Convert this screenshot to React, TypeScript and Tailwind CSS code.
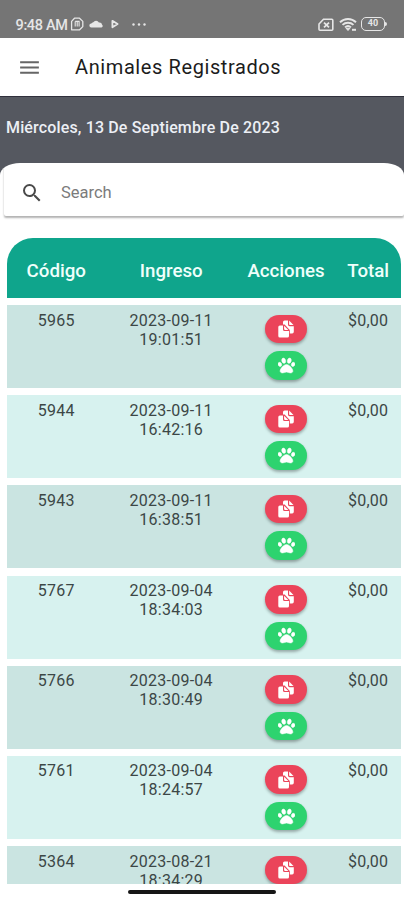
import { FaPaw } from "react-icons/fa";
import { MdMenu, MdSearch } from "react-icons/md";

interface Registro {
  codigo: string;
  fecha: string;
  hora: string;
  total: string;
}

const registros: Registro[] = [
  { codigo: "5965", fecha: "2023-09-11", hora: "19:01:51", total: "$0,00" },
  { codigo: "5944", fecha: "2023-09-11", hora: "16:42:16", total: "$0,00" },
  { codigo: "5943", fecha: "2023-09-11", hora: "16:38:51", total: "$0,00" },
  { codigo: "5767", fecha: "2023-09-04", hora: "18:34:03", total: "$0,00" },
  { codigo: "5766", fecha: "2023-09-04", hora: "18:30:49", total: "$0,00" },
  { codigo: "5761", fecha: "2023-09-04", hora: "18:24:57", total: "$0,00" },
  { codigo: "5364", fecha: "2023-08-21", hora: "18:34:29", total: "$0,00" },
];

function StatusBar() {
  return (
    <div className="flex h-[38px] shrink-0 items-start bg-[#757575] pt-[17px] pl-[15.5px] text-[#e6e6e6]">
      <span className="w-[53px] text-[14.5px] leading-[17px] font-medium whitespace-nowrap tracking-[-0.35px]">
        9:48 AM
      </span>
      <svg className="ml-[1.5px] h-[14px] w-[14px]" viewBox="0 0 14 14" fill="none" stroke="currentColor">
        <path d="M4.5 1.2h5L12.8 4.4v5.2L9.6 12.8H1.6V4.4z" strokeWidth="1.3" strokeLinejoin="round" />
        <path d="M5.2 4.4h3.9v5M5.2 4.4v5M7.2 4.4v5" strokeWidth="1.1" />
      </svg>
      <svg className="mt-[2px] ml-[5px] h-[9px] w-[14px]" viewBox="0 0 14 9" fill="currentColor">
        <path d="M2.4 8.5a2 2 0 0 1-.1-4 3 3 0 0 1 2-1.3 3.2 3.2 0 0 1 5.6.3 2.8 2.8 0 0 1 3.2 2.3 1.5 1.5 0 0 1-.6 2.7z" />
      </svg>
      <svg className="mt-[2px] ml-[8px] h-[10px] w-[8px]" viewBox="0 0 8 10" fill="none" stroke="currentColor">
        <path d="M1.4 1.8 6.6 5 1.4 8.2z" strokeWidth="1.8" strokeLinejoin="round" />
      </svg>
      <svg className="mt-[6px] ml-[12.5px] h-[3px] w-[14px]" viewBox="0 0 14 3" fill="currentColor">
        <circle cx="1.5" cy="1.5" r="1.2" />
        <circle cx="7" cy="1.5" r="1.2" />
        <circle cx="12.5" cy="1.5" r="1.2" />
      </svg>

      <div className="ml-auto flex pr-[17px]">
        <svg className="mt-[1px] h-[14px] w-[16px]" viewBox="0 0 16 14" fill="none" stroke="currentColor">
          <path d="M5.5 1.2h8.3a1 1 0 0 1 1 1v9a1 1 0 0 1-1 1H2a1 1 0 0 1-1-1V6z" strokeWidth="1.6" />
          <path d="m6 4.7 5 4.6M11 4.7 6 9.3" strokeWidth="1.8" />
        </svg>
        <svg className="ml-[5px] h-[15px] w-[18px]" viewBox="0 0 18 15" fill="none" stroke="currentColor">
          <path d="M1 5.2a11.5 11.5 0 0 1 16 0M3.5 7.9a8 8 0 0 1 11 0M6 10.4a4.5 4.5 0 0 1 6 0" strokeWidth="1.9" />
          <path d="m7 11.2 2 2.3 2-2.3z" fill="currentColor" />
          <path d="M13 12.8h4" strokeWidth="2" />
        </svg>
        <div className="ml-[4px] h-[14px] w-[24px] rounded-[5px] border-[1.5px] border-[#e6e6e6] text-center">
          <span className="block text-[9px] leading-[11px] font-bold">40</span>
        </div>
        <div className="mt-[5px] h-[4px] w-[2px] rounded-r bg-[#e6e6e6]" />
      </div>
    </div>
  );
}

function DocumentosIcon() {
  return (
    <svg className="h-[18px] w-[16px]" viewBox="0 0 16 18" fill="currentColor">
      <path d="M5 4.6V2A1.6 1.6 0 0 1 6.6.4H10v4.2a1.6 1.6 0 0 0 1.6 1.6h4.2v5.6a1.6 1.6 0 0 1-1.6 1.6h-2.4V10L6.6 4.6z" />
      <path d="M11.1.6 15.5 5h-3.6a.8.8 0 0 1-.8-.8z" />
      <path d="M.3 7A1.6 1.6 0 0 1 1.9 5.4H5v4A1.6 1.6 0 0 0 6.6 11H11v5a1.6 1.6 0 0 1-1.6 1.6H1.9A1.6 1.6 0 0 1 .3 16z" />
      <path d="m6.1 5.7 4.3 4.2H6.9a.8.8 0 0 1-.8-.8z" />
    </svg>
  );
}

function Fila({ registro }: { registro: Registro }) {
  return (
    <div className="grid h-[83px] shrink-0 grid-cols-[3fr_4fr_3fr_2fr] bg-[#d7f2ef] pt-[5.5px] text-center text-[16px] leading-[19px] tracking-[0.25px] text-[#3c4746] odd:bg-[#cae4e1]">
      <div>{registro.codigo}</div>
      <div>
        {registro.fecha}
        <br />
        {registro.hora}
      </div>
      <div className="flex flex-col items-center gap-[8px] pt-[4px]">
        <button className="flex h-[28.5px] w-[42px] items-center justify-center rounded-full bg-[#eb445a] text-white shadow-[0_2px_3px_rgba(0,0,0,0.3)]">
          <DocumentosIcon />
        </button>
        <button className="flex h-[28.5px] w-[42px] items-center justify-center rounded-full bg-[#2dd36f] text-white shadow-[0_2px_3px_rgba(0,0,0,0.3)]">
          <FaPaw size={17} stroke="currentColor" strokeWidth={14} />
        </button>
      </div>
      <div>{registro.total}</div>
    </div>
  );
}

export default function App() {
  return (
    <div className="flex h-[900px] w-[404px] flex-col overflow-hidden bg-white font-[Roboto,sans-serif]">
      <StatusBar />

      <header className="flex h-[59px] shrink-0 items-center border-b border-[#30303c] bg-white pl-[17px]">
        <MdMenu className="text-[#666666]" size={25} />
        <h1 className="ml-[33px] text-[20px] font-[450] tracking-[0.6px] text-[#1c1c1c]">
          Animales Registrados
        </h1>
      </header>

      <section className="h-[78px] shrink-0 bg-[#555860] pt-[19px] pl-[6px]">
        <p className="text-[16px] leading-6 font-medium tracking-[0.15px] text-[#eceff5]">
          Miércoles, 13 De Septiembre De 2023
        </p>
      </section>

      <main className="-mt-[12px] flex h-[721px] shrink-0 flex-col overflow-hidden rounded-t-[20px_12px] bg-white">
        <div className="ml-[4px] flex h-[53px] shrink-0 items-center rounded-[2px] pt-[7px] pl-[16px] shadow-[0_2px_2px_rgba(0,0,0,0.3)]">
          <MdSearch className="text-[#4a4a4a]" size={24} />
          <span className="ml-[17px] text-[16.5px] text-[#7b7b7b]">Search</span>
        </div>

        <div className="mt-[22px] mr-[3px] ml-[7px] flex flex-1 flex-col overflow-hidden">
          <div className="grid h-[60px] shrink-0 grid-cols-[3fr_4fr_3fr_2fr] items-center rounded-t-[26px] bg-[#0fa58c] pt-[6px] text-center text-[18.7px] font-medium text-[#effffb]">
            <div>Código</div>
            <div>Ingreso</div>
            <div>Acciones</div>
            <div>Total</div>
          </div>
          <div className="mt-[7px] flex flex-col gap-[7.2px]">
            {registros.map((registro) => (
              <Fila key={registro.codigo} registro={registro} />
            ))}
          </div>
        </div>
      </main>

      <div className="flex h-[16px] shrink-0 justify-center pt-[6px]">
        <div className="h-[4px] w-[148px] rounded-full bg-[#161616]" />
      </div>
    </div>
  );
}
